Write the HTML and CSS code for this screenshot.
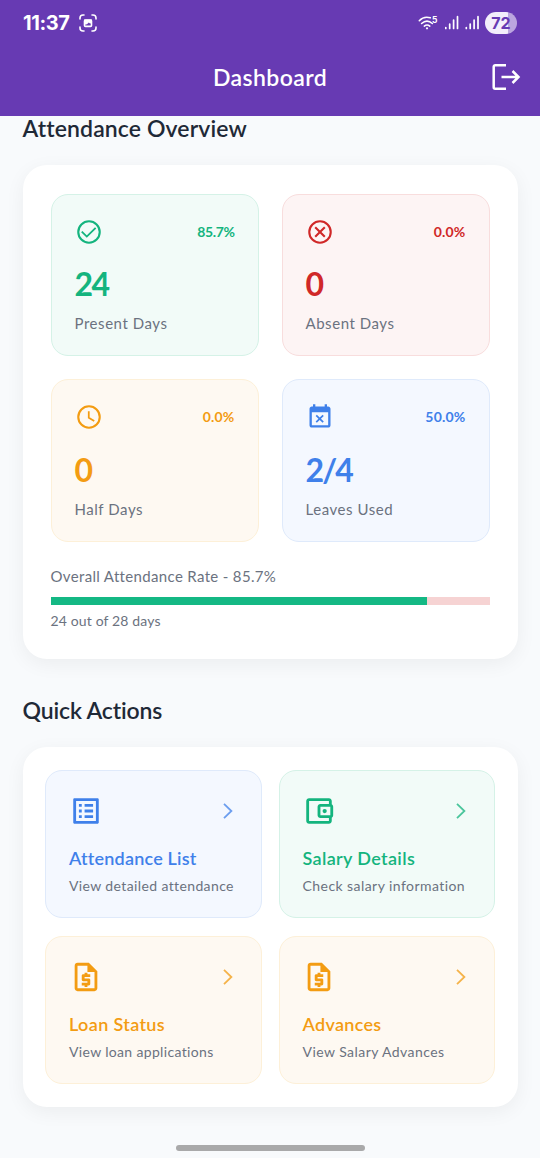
FILE: index.html
```html
<!DOCTYPE html>
<html lang="en">
<head>
<meta charset="utf-8">
<title>Dashboard</title>
<link rel="stylesheet" href="styles.css">
</head>
<body>
<header class="header">
  <div class="status">
    <span class="time">11:37</span>
    <svg class="shot" width="18" height="18" viewBox="0 0 18 18" fill="none" stroke="#fff" stroke-width="1.6" stroke-linecap="round"><path d="M1 5V4a3 3 0 0 1 3-3h1M13 1h1a3 3 0 0 1 3 3v1M17 13v1a3 3 0 0 1-3 3h-1M5 17H4a3 3 0 0 1-3-3v-1"/><rect x="5.500" y="6" width="7" height="6.400" rx="1"/><path d="M5 5.500h8v3.700l-2 .4-1.200-1L8 10.200l-3 .500z" fill="#fff" stroke="none"/></svg>
    <svg class="signals" width="62" height="18" viewBox="0 0 62 18" fill="none" stroke="#fff" stroke-linecap="round">
      <path d="M1.300 6.700C4.500 3.300 8.500 2.600 12.300 3.800M3.600 9.500c3.300-2.900 7.500-2.900 10.800 0M6.300 12.100c1.900-1.500 3.600-1.500 5.500 0" stroke-width="1.600"/><circle cx="9" cy="14.300" r="1.100" fill="#fff" stroke="none"/>
      <text class="band" x="13.900" y="8.700">5</text>
      <path d="M27.800 14.500v-1M31.700 14.500V10M35.600 14.500V6M39.500 14.500V2.700M48.300 14.500v-1M52.200 14.500V10M56.100 14.500V6M60 14.500V2.700" stroke-width="1.700"/>
    </svg>
    <span class="battery">72</span>
  </div>
  <div class="appbar">
    <h1 class="title">Dashboard</h1>
    <svg class="logout" width="30" height="28" viewBox="0 0 30 28" fill="none" stroke="#fff" stroke-width="2.500"><path d="M15 2.200H4.200a1.500 1.500 0 0 0-1.500 1.500v20.600a1.500 1.500 0 0 0 1.500 1.500H15M10.500 14h17M21.500 8l6 6-6 6"/></svg>
  </div>
</header>
<main class="content">
  <h2 class="section-title overview-title">Attendance Overview</h2>
  <section class="card overview">
    <div class="stats">
      <article class="tile green">
        <div class="row"><svg class="icon" viewBox="0 0 24 24" fill="none" stroke="currentColor"><circle cx="12" cy="12" r="9.200" stroke-width="1.800"/><path d="M5.800 11.700l4.300 4.200 7.600-7.500" stroke-width="1.600"/></svg><span class="pct p1">85.7%</span></div>
        <div class="value v1">24</div><div class="label l1">Present Days</div>
      </article>
      <article class="tile red">
        <div class="row"><svg class="icon" viewBox="0 0 24 24" fill="none" stroke="currentColor"><circle cx="12" cy="12" r="9.200" stroke-width="1.800"/><path d="M7.900 7.900l8.200 8.200M16.100 7.900l-8.200 8.200" stroke-width="1.800"/></svg><span class="pct">0.0%</span></div>
        <div class="value">0</div><div class="label">Absent Days</div>
      </article>
      <article class="tile amber">
        <div class="row"><svg class="icon" viewBox="0 0 24 24" fill="none" stroke="currentColor"><circle cx="12" cy="12" r="9.200" stroke-width="1.800"/><path d="M11.800 7v5.700l4.700 2.800" stroke-width="1.500"/></svg><span class="pct">0.0%</span></div>
        <div class="value">0</div><div class="label">Half Days</div>
      </article>
      <article class="tile blue">
        <div class="row"><svg class="icon" viewBox="0 0 24 24" fill="currentColor"><path d="M9.310 17l2.440-2.440L14.190 17l1.060-1.060-2.440-2.440 2.440-2.440L14.190 10l-2.440 2.440L9.310 10l-1.060 1.060 2.440 2.440-2.440 2.440zM19 3h-1V1h-2v2H8V1H6v2H5c-1.110 0-1.990.9-1.990 2L3 19c0 1.100.89 2 2 2h14c1.100 0 2-.9 2-2V5c0-1.100-.9-2-2-2zm0 16H5V8h14v11z"/></svg><span class="pct">50.0%</span></div>
        <div class="value v4">2/4</div><div class="label">Leaves Used</div>
      </article>
    </div>
    <p class="rate">Overall Attendance Rate - 85.7%</p>
    <div class="bar"><div class="fill" style="width:85.7%"></div></div>
    <p class="days">24 out of 28 days</p>
  </section>
  <h2 class="section-title quick-title">Quick Actions</h2>
  <section class="card quick">
    <article class="tile action blue">
      <div class="row"><svg class="big" viewBox="0 0 24 24" fill="currentColor"><path d="M19 5v14H5V5h14m1.100-2H3.900c-.5 0-.9.4-.9.9v16.200c0 .4.4.9.9.9h16.200c.4 0 .9-.5.9-.9V3.900c0-.5-.5-.9-.9-.9zM11 7h6v2h-6V7zm0 4h6v2h-6v-2zm0 4h6v2h-6zM7 7h2v2H7zm0 4h2v2H7zm0 4h2v2H7z"/></svg><svg class="chev" viewBox="0 0 10 16"><path d="M1 .8 8.400 8 1 15.200"/></svg></div>
      <h3 class="name n1">Attendance List</h3><p class="desc d1">View detailed attendance</p>
    </article>
    <article class="tile action green">
      <div class="row"><svg class="big" viewBox="0 0 24 24" fill="currentColor"><path d="M21 7.280V5c0-1.100-.9-2-2-2H5c-1.110 0-2 .9-2 2v14c0 1.100.89 2 2 2h14c1.100 0 2-.9 2-2v-2.280c.59-.35 1-.98 1-1.720V9c0-.74-.41-1.370-1-1.720zM20 9v6h-7V9h7zM5 19V5h14v2h-6c-1.100 0-2 .9-2 2v6c0 1.100.9 2 2 2h6v2H5z"/><circle cx="16" cy="12" r="1.500"/></svg><svg class="chev" viewBox="0 0 10 16"><path d="M1 .8 8.400 8 1 15.200"/></svg></div>
      <h3 class="name">Salary Details</h3><p class="desc">Check salary information</p>
    </article>
    <article class="tile action amber">
      <div class="row"><svg class="big" viewBox="0 0 24 24" fill="currentColor"><path d="M14 2H6c-1.100 0-1.990.9-1.990 2L4 20c0 1.100.89 2 1.990 2H18c1.100 0 2-.9 2-2V8l-6-6zM6 20V4h7v4.500h5V20H6zM11 19h2v-1h1c.55 0 1-.45 1-1v-3c0-.55-.45-1-1-1h-3v-1h4v-2h-2V9h-2v1h-1c-.55 0-1 .45-1 1v3c0 .55.45 1 1 1h3v1H9v2h2v1z"/></svg><svg class="chev" viewBox="0 0 10 16"><path d="M1 .8 8.400 8 1 15.200"/></svg></div>
      <h3 class="name">Loan Status</h3><p class="desc d3">View loan applications</p>
    </article>
    <article class="tile action amber">
      <div class="row"><svg class="big" viewBox="0 0 24 24" fill="currentColor"><path d="M14 2H6c-1.100 0-1.990.9-1.990 2L4 20c0 1.100.89 2 1.990 2H18c1.100 0 2-.9 2-2V8l-6-6zM6 20V4h7v4.500h5V20H6zM11 19h2v-1h1c.55 0 1-.45 1-1v-3c0-.55-.45-1-1-1h-3v-1h4v-2h-2V9h-2v1h-1c-.55 0-1 .45-1 1v3c0 .55.45 1 1 1h3v1H9v2h2v1z"/></svg><svg class="chev" viewBox="0 0 10 16"><path d="M1 .8 8.400 8 1 15.200"/></svg></div>
      <h3 class="name n4">Advances</h3><p class="desc">View Salary Advances</p>
    </article>
  </section>
</main>
<div class="home"></div>
</body>
</html>
```
FILE: styles.css
```css
* { box-sizing: border-box; margin: 0; }
body {
  height: 1158px;
  overflow: hidden;
  display: flex;
  flex-direction: column;
  background: #f8fafc;
  color: #1f2937;
  font-family: Lato, "Open Sans", sans-serif;
}
svg { display: block; flex: none; }
.header { height: 116px; background: #673ab3; color: #fff; flex: none; }
.status { height: 46px; display: flex; align-items: center; padding: 0 23px; }
.time { font: 700 20px/24px Inter, sans-serif; width: 56px; letter-spacing: -.4px; }
.signals { margin-left: auto; margin-right: 5px; }
.band { font: 700 8.500px Inter, sans-serif; fill: #fff; stroke: none; }
.battery {
  width: 32px; height: 22px; border-radius: 11px;
  background: linear-gradient(90deg, #f3eefb 72%, #bba5df 72%);
  color: #673ab3; font: 700 16px/22px Inter, sans-serif; text-align: center;
}
.appbar { height: 61px; display: grid; grid-template-columns: 1fr auto 1fr; align-items: center; padding: 0 19px; }
.title { grid-column: 2; font-size: 23px; font-weight: 600; line-height: 28px; letter-spacing: .4px; white-space: nowrap; }
.logout { justify-self: end; }
.content { padding: 0 22.500px; flex: 1; }
.section-title { font-size: 23px; font-weight: 600; line-height: 28px; white-space: nowrap; }
.overview-title { height: 48.500px; line-height: 24px; letter-spacing: .12px; }
.quick-title { margin: 37px 0 23px; letter-spacing: -.15px; }
.card { background: #fff; border-radius: 24px; box-shadow: 0 5px 20px rgba(0, 0, 0, .055); }
.overview { height: 494px; padding: 29px 28px 0; }
.stats { display: grid; grid-template-columns: 1fr 1fr; gap: 23px; }
.tile { height: 162.500px; border: 1px solid; border-radius: 17px; padding: 23px; white-space: nowrap; }
.row { display: flex; align-items: center; justify-content: space-between; }
.icon { width: 28px; height: 28px; }
.pct { font-size: 14px; font-weight: 700; line-height: 28px; letter-spacing: .2px; }
.p1 { letter-spacing: -.4px; }
.value { font-size: 32px; font-weight: 700; line-height: 40px; margin-top: 18.500px; }
.v1 { letter-spacing: -1.500px; }
.v4 { letter-spacing: -1.800px; }
.label { font-size: 15px; line-height: 20px; margin-top: 9px; letter-spacing: .55px; color: #6b7280; }
.green { color: #14b47e; background: #f2fbf8; border-color: #d5f2e7; }
.red { color: #d02828; background: #fdf4f4; border-color: #f8dddd; }
.amber { color: #f39c12; background: #fef9f2; border-color: #fdf0d8; }
.blue { color: #3f80ea; background: #f4f8ff; border-color: #dfeafb; }
.rate { font-size: 15px; line-height: 20px; letter-spacing: .34px; color: #6b7280; margin-top: 24px; white-space: nowrap; }
.bar { height: 8px; margin-top: 11.500px; background: #f6d3d3; }
.fill { height: 8px; background: #14b884; }
.days { font-size: 14px; line-height: 18px; letter-spacing: .14px; color: #6b7280; margin-top: 7px; }
.quick { height: 360px; padding: 23px 22.500px; display: grid; grid-template-columns: 1fr 1fr; gap: 17.500px 17px; align-content: start; }
.action { height: 148.500px; }
.big { width: 34px; height: 34px; margin-left: -.5px; }
.chev { width: 10px; height: 16px; margin-right: 5px; fill: none; stroke: currentColor; stroke-width: 1.800; opacity: .75; }
.name { font-size: 18px; font-weight: 600; line-height: 24px; margin-top: 18px; letter-spacing: .36px; }
.n1 { letter-spacing: .2px; }
.n4 { letter-spacing: .3px; }
.desc { font-size: 14px; line-height: 18px; margin-top: 7px; letter-spacing: .44px; color: #6b7280; }
.d1 { letter-spacing: .38px; }
.d3 { letter-spacing: .34px; }
.home { width: 189px; height: 6px; border-radius: 3px; background: #a9a9aa; margin: 0 auto 7.500px; flex: none; }
```
